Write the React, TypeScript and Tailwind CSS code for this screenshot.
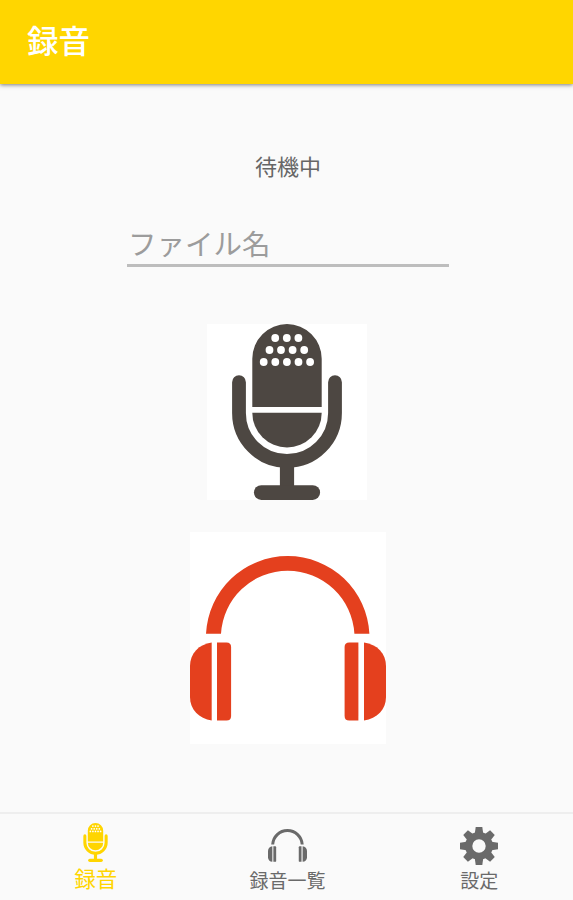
import React, { useState } from 'react';

type TabId = 'RECORD' | 'LIST' | 'SETTINGS';

interface IconProps {
  className?: string;
}

const MIC_HOLES = [
  [68.7, 14], [80.3, 14], [91.9, 14],
  [63, 26], [74.5, 26], [86.1, 26], [97.7, 26],
  [57.2, 38], [68.8, 38], [80.4, 38], [92, 38], [103.6, 38],
];

const MicIcon: React.FC<IconProps> = ({ className }) => (
  <svg viewBox="25.5 0 110 176" className={className} fill="currentColor">
    <path d="M45.8 83V34.7a34.7 34.7 0 0 1 69.4 0V83z" />
    <path d="M45.8 88.8h69.4a34.7 34.7 0 0 1-69.4 0z" />
    <path
      d="M32.5 58.2V89a48 48 0 0 0 96 0V58.2"
      fill="none"
      stroke="currentColor"
      strokeWidth="13.8"
      strokeLinecap="round"
    />
    <rect x="73.4" y="140" width="14.2" height="25" />
    <rect x="47.4" y="161.2" width="66.2" height="14.8" rx="7.4" />
    {MIC_HOLES.map(([cx, cy]) => (
      <circle key={`${cx}-${cy}`} cx={cx} cy={cy} r="3.9" fill="#fff" />
    ))}
  </svg>
);

const HeadphonesIcon: React.FC<IconProps> = ({ className }) => (
  <svg viewBox="0 0 196 165" className={className} fill="currentColor">
    <path d="M16 77.8A81.8 81.8 0 0 1 179.4 77.8H164.4A66.8 66.8 0 0 0 31 77.8z" />
    <path d="M21.7 86.4V164.4C9 162.5 0 154 0 141V110C0 97 9 88.3 21.7 86.4z" />
    <path d="M27 86.4h9.5q4.6 0 4.6 4.6v69q0 4.6-4.6 4.6H27z" />
    <path d="M168.4 86.4h-9.2q-4.6 0-4.6 4.6v69q0 4.6 4.6 4.6h9.2z" />
    <path d="M174 86.4V164.4C187 162.5 196 154 196 141V110C196 97 187 88.3 174 86.4z" />
  </svg>
);

const GEAR_ANGLES = [0, 45, 90, 135, 180, 225, 270, 315];

const GearIcon: React.FC<IconProps> = ({ className }) => (
  <svg viewBox="-19 -19 38 38" className={className} fill="currentColor">
    {GEAR_ANGLES.map(angle => (
      <path key={angle} d="M-4.4-11L-3.3-19H3.3L4.4-11z" transform={`rotate(${angle})`} />
    ))}
    <circle r="10.3" fill="none" stroke="currentColor" strokeWidth="7.2" />
  </svg>
);

const App: React.FC = () => {
  const [activeTab, setActiveTab] = useState<TabId>('RECORD');
  const [fileName, setFileName] = useState('');

  const tabColor = (id: TabId) => (activeTab === id ? 'text-[#ffd500]' : 'text-[#6a6a6a]');
  const labelSize = (id: TabId) => (activeTab === id ? 'text-[21.5px]' : 'text-[19px]');

  return (
    <div className="flex h-[900px] w-full flex-col overflow-hidden bg-[#fafafa] font-['Noto_Sans_CJK_JP',sans-serif]">
      <header className="z-10 flex h-[84px] shrink-0 items-center bg-[#ffd600] pb-[5px] pl-[27px] shadow-[0_1px_4px_rgba(0,0,0,0.5)]">
        <h1 className="text-[31.5px] font-medium leading-none text-white">録音</h1>
      </header>

      <main className="flex flex-1 flex-col items-center pl-[3px]">
        <p className="mt-[69px] text-[22px] leading-6 text-[#666666]">待機中</p>
        <input
          type="text"
          placeholder="ファイル名"
          value={fileName}
          onChange={e => setFileName(e.target.value)}
          className="mt-[43px] h-[47px] w-[322px] border-b-3 border-[#bdbdbd] pl-px text-[28.5px] outline-none placeholder:text-[#9c9c9c]"
        />
        <button className="mr-0.5 mt-[57px] flex h-[176px] w-[160px] justify-center bg-white">
          <MicIcon className="h-[176px] w-[110px] text-[#4d4742]" />
        </button>
        <button className="mt-8 flex h-[212px] w-[196px] justify-center bg-white pt-[23.5px]">
          <HeadphonesIcon className="h-[165px] w-[196px] text-[#e4401e]" />
        </button>
      </main>

      <nav className="-mr-0.5 grid h-[88px] shrink-0 grid-cols-3 border-t-2 border-[#eeeeee]">
        <button onClick={() => setActiveTab('RECORD')} className={`flex flex-col items-center ${tabColor('RECORD')}`}>
          <MicIcon className="mt-[9px] h-[39px] w-[25px]" />
          <span className={`mt-[4px] leading-6 ${labelSize('RECORD')}`}>録音</span>
        </button>
        <button onClick={() => setActiveTab('LIST')} className={`flex flex-col items-center ${tabColor('LIST')}`}>
          <HeadphonesIcon className="mt-[15px] h-[33px] w-[39px]" />
          <span className={`mt-[6px] leading-6 ${labelSize('LIST')}`}>録音一覧</span>
        </button>
        <button onClick={() => setActiveTab('SETTINGS')} className={`flex flex-col items-center ${tabColor('SETTINGS')}`}>
          <GearIcon className="mt-[13px] h-[38px] w-[38px]" />
          <span className={`mt-[3px] leading-6 ${labelSize('SETTINGS')}`}>設定</span>
        </button>
      </nav>
    </div>
  );
};

export default App;
